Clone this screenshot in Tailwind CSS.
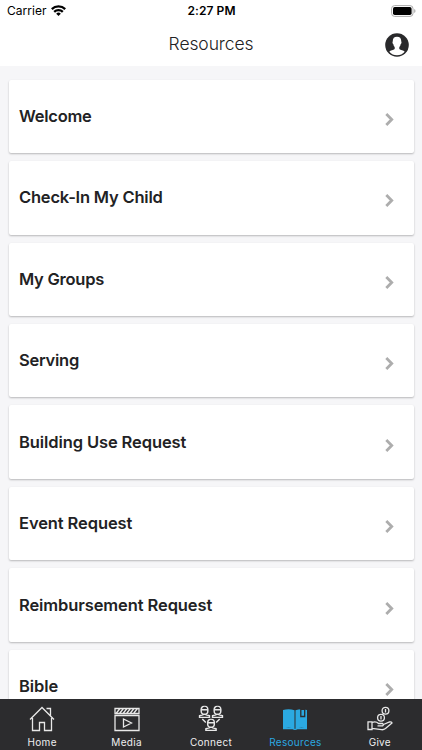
<!DOCTYPE html>
<html lang="en">
<head>
<meta charset="utf-8">
<meta name="viewport" content="width=device-width, initial-scale=1">
<title>Resources</title>
<script src="https://cdn.jsdelivr.net/npm/@tailwindcss/browser@4"></script>
</head>
<body class="h-[750px] w-[422px] overflow-hidden bg-[#f6f6f8] font-['Inter','Liberation_Sans',sans-serif] text-[#222224]">
<svg class="hidden">
  <symbol id="chevron" viewBox="0 0 9 13"><path d="M1.300 1.100 6.700 6.500 1.300 11.900" fill="none" stroke="#adadad" stroke-width="2.800"/></symbol>
  <symbol id="person" viewBox="0 0 11 12"><path d="M2.300 3.900a3.200 3.300 0 0 1 6.400 0v1.300a3.200 3.200 0 0 1-6.400 0zM2.300 4h6.400M4 8v.9L.6 9.900v1.500h9.800V9.900L7 8.900V8"/></symbol>
</svg>
<div class="flex h-full flex-col">
  <header class="flex h-[66px] shrink-0 flex-col bg-white">
    <div class="grid h-[22px] grid-cols-3 items-center pr-1.5 pl-[7px] text-black">
      <div class="flex items-center gap-[4px] text-[12px] tracking-[0.05px]">
        <span>Carrier</span>
        <svg class="-mt-[2px] h-[11px] w-[15px]" viewBox="0 0 15 11" fill="none" stroke="#000" stroke-width="2.300"><path d="M.8 4.100a9.600 9.600 0 0 1 13.400 0M3.200 6.900a6.100 6.100 0 0 1 8.600 0"/><path d="M5.200 8.700a3.300 3.300 0 0 1 4.600 0L7.500 11z" fill="#000" stroke="none"/></svg>
      </div>
      <div class="text-center text-[12px] font-semibold tracking-[0.1px]">2:27 PM</div>
      <svg class="-mt-px h-3 w-[25px] justify-self-end" viewBox="0 0 25 12"><rect x=".6" y=".6" width="21.400" height="10.800" rx="3" fill="#fff" stroke="#aaa"/><rect x="2" y="2" width="18.600" height="8" rx="1.700"/><path d="M23.200 4v4q1.300-.6 1.300-2t-1.300-2" fill="#aaa"/></svg>
    </div>
    <div class="grid h-11 grid-cols-[1fr_auto_1fr] items-center pr-[13px]">
      <span></span>
      <h1 class="-mt-px pl-[13px] text-[17.5px] leading-none font-light tracking-[-0.1px]">Resources</h1>
      <svg class="mt-[2px] size-6 justify-self-end" viewBox="0 0 24 24"><circle cx="12" cy="12" r="11.800" fill="#29292b"/><path d="M12 3.800c-3 0-4.400 1.800-4.200 4.700-.7.500-.1 2.300.6 2.800.2 1.400.7 2.100 1.300 2.700v2c-1.200 1-4.300 1.300-5.400 2.700A10.100 10.100 0 0 0 19.700 18.700c-1.100-1.400-4.200-1.700-5.400-2.700v-2c.6-.6 1.100-1.300 1.300-2.700.7-.5 1.300-2.300.6-2.800.2-2.900-1.200-4.700-4.200-4.700z" fill="#fff"/></svg>
    </div>
  </header>
  <main class="flex min-h-0 flex-1 flex-col gap-2 overflow-hidden px-[8.500px] pt-[13.7px] text-[16.5px] font-semibold tracking-[-0.1px]">
    <div class="flex h-[73.45px] shrink-0 items-center justify-between rounded-[2px] bg-white pr-[20px] pl-[10.5px] shadow-[0_1px_2px_rgba(0,0,0,0.25)]"><span class="tracking-[-0.25px]">Welcome</span><svg class="mt-[6px] h-[13px] w-[9px]"><use href="#chevron"/></svg></div>
    <div class="flex h-[73.45px] shrink-0 items-center justify-between rounded-[2px] bg-white pr-[20px] pl-[10.5px] shadow-[0_1px_2px_rgba(0,0,0,0.25)]"><span class="tracking-[-0.2px]">Check-In My Child</span><svg class="mt-[6px] h-[13px] w-[9px]"><use href="#chevron"/></svg></div>
    <div class="flex h-[73.45px] shrink-0 items-center justify-between rounded-[2px] bg-white pr-[20px] pl-[10.5px] shadow-[0_1px_2px_rgba(0,0,0,0.25)]"><span class="tracking-[-0.25px]">My Groups</span><svg class="mt-[6px] h-[13px] w-[9px]"><use href="#chevron"/></svg></div>
    <div class="flex h-[73.45px] shrink-0 items-center justify-between rounded-[2px] bg-white pr-[20px] pl-[10.5px] shadow-[0_1px_2px_rgba(0,0,0,0.25)]"><span class="tracking-[-0.25px]">Serving</span><svg class="mt-[6px] h-[13px] w-[9px]"><use href="#chevron"/></svg></div>
    <div class="flex h-[73.45px] shrink-0 items-center justify-between rounded-[2px] bg-white pr-[20px] pl-[10.5px] shadow-[0_1px_2px_rgba(0,0,0,0.25)]"><span>Building Use Request</span><svg class="mt-[6px] h-[13px] w-[9px]"><use href="#chevron"/></svg></div>
    <div class="flex h-[73.45px] shrink-0 items-center justify-between rounded-[2px] bg-white pr-[20px] pl-[10.5px] shadow-[0_1px_2px_rgba(0,0,0,0.25)]"><span>Event Request</span><svg class="mt-[6px] h-[13px] w-[9px]"><use href="#chevron"/></svg></div>
    <div class="flex h-[73.45px] shrink-0 items-center justify-between rounded-[2px] bg-white pr-[20px] pl-[10.5px] shadow-[0_1px_2px_rgba(0,0,0,0.25)]"><span>Reimbursement Request</span><svg class="mt-[6px] h-[13px] w-[9px]"><use href="#chevron"/></svg></div>
    <div class="flex h-[73.45px] shrink-0 items-center justify-between rounded-[2px] bg-white pr-[20px] pl-[10.5px] shadow-[0_1px_2px_rgba(0,0,0,0.25)]"><span>Bible</span><svg class="mt-[6px] h-[13px] w-[9px]"><use href="#chevron"/></svg></div>
  </main>
  <nav class="grid h-[51px] shrink-0 grid-cols-5 bg-[#2c2c2e] pt-[6px] text-[10px] leading-3 tracking-[0.3px] text-[#eee]">
    <a class="flex flex-col items-center gap-[3px]"><svg class="h-7 w-[26px]" viewBox="0 0 26 28" fill="none" stroke="#e8e8e8" stroke-width="1.300"><path d="M1 14.500 13 2.500l12 12M3.500 13v12.500h7v-8h5v8h7V13M17.500 3.500h4v7"/></svg>Home</a>
    <a class="flex flex-col items-center gap-[3px]"><svg class="h-7 w-[26px]" viewBox="0 0 26 28" fill="none" stroke="#e8e8e8" stroke-width="1.300"><path d="M1 3.500h24V8.500H1zM1 10.500h24v15H1zM9.500 14v8l8-4zM2 8.500l4-5M5.500 8.500l4-5M9 8.500l4-5M12.500 8.500l4-5M16 8.500l4-5M19.500 8.500l4-5"/></svg>Media</a>
    <a class="flex flex-col items-center gap-[3px]"><svg class="h-7 w-[26px]" viewBox="0 0 26 28" fill="none" stroke="#e8e8e8" stroke-width="1.400"><use href="#person" x="0.500" y="0.500" width="12" height="12.500"/><use href="#person" x="13.500" y="0.500" width="12" height="12.500"/><use href="#person" x="7" y="13.500" width="12" height="12.500"/><path d="m4.300 14 3.500 3.500M21.700 14l-3.500 3.500"/></svg>Connect</a>
    <a class="flex flex-col items-center gap-[3px] text-[#2ba9e1]"><svg class="h-7 w-[26px]" viewBox="0 0 26 28"><path d="M1 5q6-1.800 11.500.2v18.300Q7 22 1 23.300zM13.500 5.200Q19 3.200 25 5v18.300q-6-1.300-11.500.2zM1 23h9.500q2.500 1.500 5 0H25v1.200h-9.500q-2.500 1.500-5 0H1z" fill="#2ba9e1"/><path d="M18.800 4.300h3.900v7.200H18.800z" fill="#2ba9e1" stroke="#2c2c2e" stroke-width="1.300"/></svg>Resources</a>
    <a class="flex flex-col items-center gap-[3px]"><svg class="h-7 w-[26px]" viewBox="0 0 26 28" fill="none" stroke="#e8e8e8" stroke-width="1.300"><circle cx="18.500" cy="5.700" r="3.400"/><circle cx="14" cy="12.800" r="3.400"/><path d="M18.500 4v3.400M14 11.100v3.400M1 16.800h4v7.700H1zM5 17.500q4-1.500 6.500 1h4q1.700 1.500 0 2.300H10.500M16.500 19.500l6-2.500q2.300-.4 2.500 1l-6.500 5.500q-2 1.500-4 1.200L5 23.300"/></svg>Give</a>
  </nav>
</div>
</body>
</html>
